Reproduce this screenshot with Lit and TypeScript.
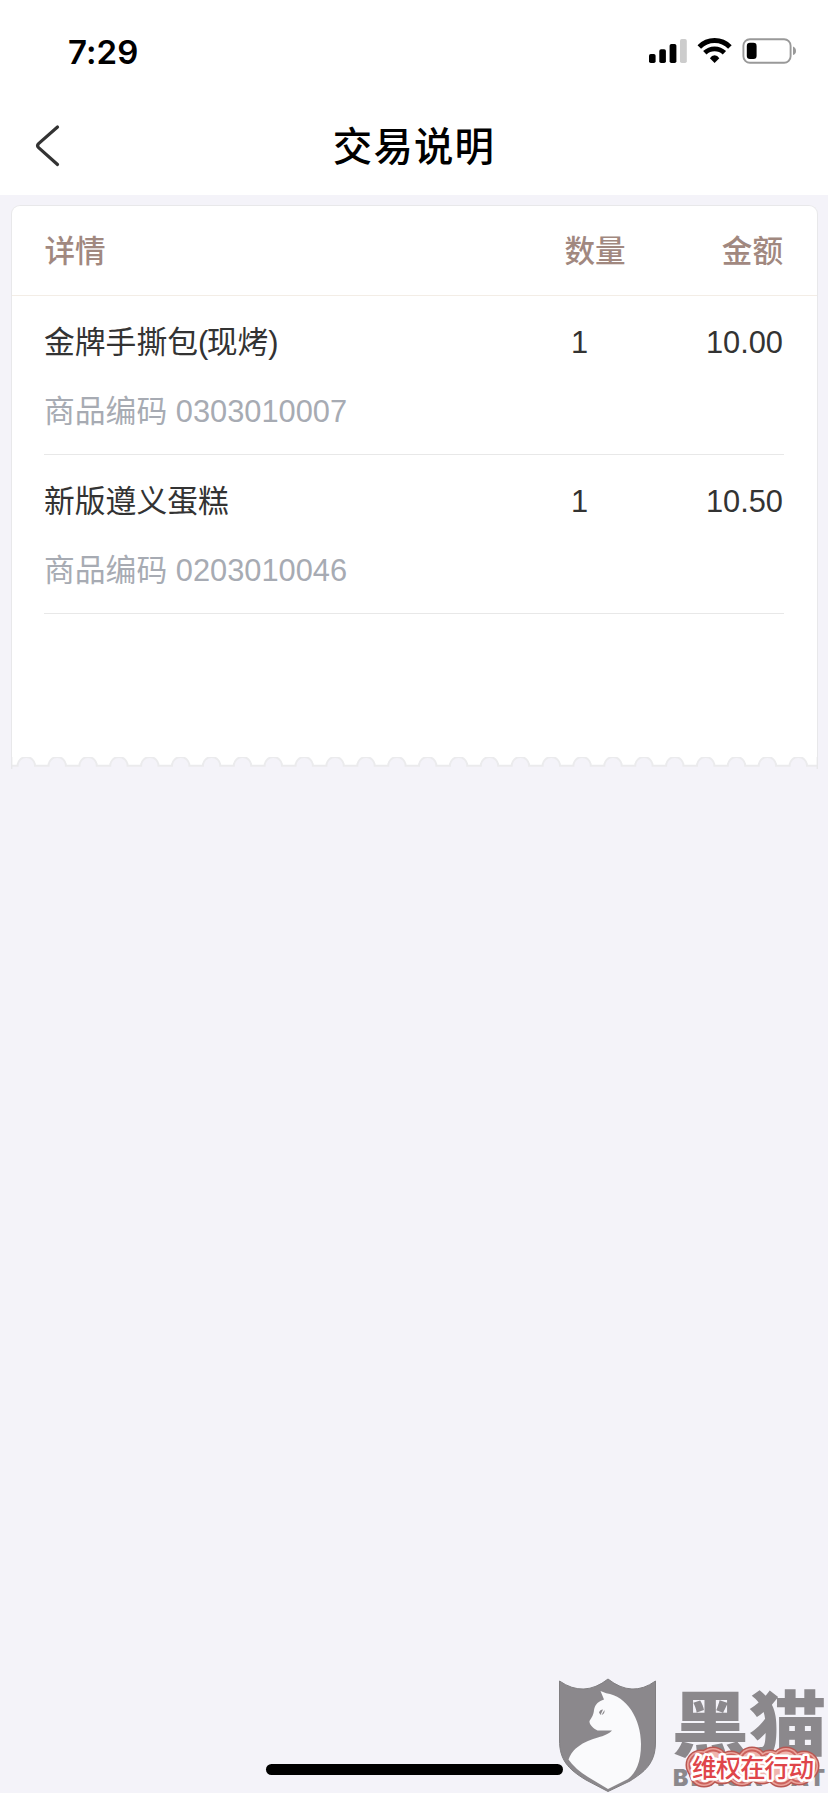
import { LitElement, html, css, svg } from "lit";
import { customElement } from "lit/decorators.js";

const ITEMS = [
  { name: "金牌手撕包(现烤)", code: "0303010007", qty: 1, amount: "10.00" },
  { name: "新版遵义蛋糕", code: "0203010046", qty: 1, amount: "10.50" },
];

@customElement("status-bar")
class StatusBar extends LitElement {
  static styles = css`
    :host { display: flex; justify-content: space-between; align-items: center; height: 102px; padding: 0 32px 0 68px; }
    .time { padding-top: 2px; font: 600 33px/40px Inter, sans-serif; letter-spacing: 0.1px; }
    svg { display: block; }
  `;
  render() {
    return html`
      <span class="time">7:29</span>
      <svg width="148" height="26" viewBox="648 38 148 26">
        <rect x="649" y="54" width="6.6" height="9" rx="1.8" />
        <rect x="659.3" y="49.3" width="6.6" height="13.7" rx="1.8" />
        <rect x="669.6" y="44" width="6.8" height="19" rx="1.8" />
        <rect x="680" y="39" width="6.8" height="24" rx="1.8" fill="#ccc" />
        <g fill="none" stroke="#000">
          <path d="M699.3 46.9a21.5 21.5 0 0 1 30.6 0" stroke-width="5" />
          <path d="M704.8 52.8a14 14 0 0 1 19.6 0" stroke-width="4.8" />
        </g>
        <path d="M714.6 63L709.9 58.2Q711.8 55.3 714.6 55.3T719.3 58.2Z" />
        <rect x="743.4" y="39.2" width="47.2" height="23.6" rx="6.5" fill="none" stroke="#999" stroke-width="1.9" />
        <rect x="746.8" y="42.8" width="9.8" height="16.2" rx="3.2" />
        <path d="M793 46.6Q796 48 796 51T793 55Z" fill="#999" />
      </svg>
    `;
  }
}

@customElement("nav-bar")
class NavBar extends LitElement {
  static styles = css`
    :host { display: grid; grid-template-columns: 100px 1fr 100px; align-items: center; height: 93px; }
    .back { display: block; margin: -5px 0 0 34px; }
    .title { margin: -10px 0 0; text-align: center; font: 500 39.4px/50px "Noto Sans CJK SC", sans-serif; letter-spacing: 1.2px; white-space: nowrap; }
  `;
  render() {
    return html`
      <svg class="back" width="28" height="44" viewBox="34 124 28 44" fill="none" stroke="#333" stroke-width="3.2" stroke-linecap="round">
        <path d="M57.5 127L38.6 143.6Q36.6 145.6 38.6 147.6L57.5 164.5" />
      </svg>
      <h1 class="title">交易说明</h1>
    `;
  }
}

@customElement("receipt-card")
class ReceiptCard extends LitElement {
  static styles = css`
    :host { display: block; margin: 10px 10px 0 11px; font: 30.8px/44px "Liberation Sans", "Noto Sans CJK SC", sans-serif; color: #333; }
    .body { height: 552px; box-sizing: border-box; background: #fff; border: 1.5px solid #e8e8ea; border-bottom: 0; border-radius: 9px 9px 0 0; }
    .cols { display: grid; grid-template-columns: 520px 100px 1fr; align-items: center; }
    .head { height: 86px; padding: 0 34px 3px 32.5px; border-bottom: 1px solid #f3ede6; color: #a1887f; font-family: "Noto Sans CJK SC", sans-serif; font-weight: 500; font-size: 30.6px; }
    .item { height: 158px; margin: 0 33px 0 32px; border-bottom: 1px solid #e8e8e8; }
    .line { padding-top: 25px; padding-right: 1px; }
    .paren { letter-spacing: -1.5px; }
    .qty { padding-left: 7px; }
    .amount { text-align: right; }
    .code { padding-top: 25px; color: #a7abb3; }
    .edge { display: block; }
  `;
  render() {
    const holes = Array.from({ length: 26 }, (_, k) => 15.3 + k * 30.88);
    const edge = holes.map((x) => `H${(x - 8.7).toFixed(1)}a8.7 8.7 0 0 1 17.4 0`).join("");
    return html`
      <div class="body">
        <div class="cols head"><span>详情</span><span>数量</span><span class="amount">金额</span></div>
        ${ITEMS.map(
          (item) => html`
            <div class="item">
              <div class="cols line">
                <span>${item.name.split(/([()])/).map((part) => (/[()]/.test(part) ? html`<span class="paren">${part}</span>` : part))}</span>
                <span class="qty">${item.qty}</span><span class="amount">${item.amount}</span>
              </div>
              <div class="code">商品编码 ${item.code}</div>
            </div>
          `
        )}
      </div>
      <svg class="edge" width="807" height="12" viewBox="0 0 807 12">
        <path d="M.7 0V8.8${edge}H806.3V0Z" fill="#fff" />
        <path d="M.7 8.8${edge}H806" fill="none" stroke="#ebebed" stroke-width="2" />
        <path d="M.7 0V12M806.3 0V12" stroke="#e8e8ea" stroke-width="1.4" />
      </svg>
    `;
  }
}

@customElement("brand-mark")
class BrandMark extends LitElement {
  static styles = css`
    :host { display: block; }
    svg { display: block; }
    .brand { font: 900 71px "Noto Sans CJK SC", sans-serif; fill: #8b888c; }
    .latin { font: 900 23px Inter, sans-serif; fill: #8b888c; }
    .slogan { font: 500 25.5px "Noto Sans CJK SC", sans-serif; fill: #df454a; stroke: #fff; stroke-width: 5px; stroke-linejoin: round; paint-order: stroke; }
  `;
  render() {
    const bumps = [
      [701, 1765], [713, 1762], [731, 1766], [752, 1762], [770, 1765], [786, 1762], [804, 1766],
      [704, 1772], [722, 1769], [742, 1771], [762, 1769], [781, 1772], [799, 1770],
    ];
    const layers = [
      [15.5, "#b95752"], [14, "#eba49c"], [12.4, "#cd625d"], [10.6, "#efb5ae"],
    ] as [number, string][];
    return html`
      <svg width="272" height="123" viewBox="556 1670 272 123">
        <path d="M559.5 1681Q584 1698 608 1679Q632 1698 655.5 1681V1742C655.5 1764 644 1772 630 1781L608 1791.5L586 1780C568 1769 559.5 1760 559.5 1740Z" fill="#8b888c" stroke="#807e81" stroke-width="1" />
        <path d="M600.5 1691L606.2 1693.2C627 1696 641 1719 641 1744C641 1762 636 1773 628 1779L608 1789L588 1777Q575 1769 568.5 1759.5C575 1742 595 1739 604 1735.5Q610 1733 612 1730.5H597.5C594 1729 589 1725 589.5 1721C592 1717 593.5 1715 594 1710C595 1704 599 1701 604 1699.5Z" fill="#fafafc" />
        <path d="M599 1712.5Q600 1709.500 603 1709.5L600.5 1715ZM604.5 1710Q605 1714 601.5 1715Z" fill="#8b888c" />
        <text class="brand" x="671.5" y="1750" textLength="155" lengthAdjust="spacingAndGlyphs">黑猫</text>
        <text class="latin" x="673" y="1786" textLength="152">BLACK CAT</text>
        ${layers.map(([r, color]) => bumps.map(([x, y]) => svg`<circle cx=${x} cy=${y} r=${r} fill=${color} />`))}
        <text class="slogan" x="692" y="1776.5" textLength="122">维权在行动</text>
      </svg>
    `;
  }
}

@customElement("app-root")
class AppRoot extends LitElement {
  static styles = css`
    :host { display: block; position: relative; height: 1793px; overflow: hidden; background: #f4f3f9; }
    .top { background: #fff; color: #000; }
    .home { position: absolute; left: 266px; bottom: 18px; width: 296.5px; height: 11px; border-radius: 6px; background: #000; }
    .mark { position: absolute; right: 0; bottom: 0; }
  `;
  render() {
    return html`
      <header class="top"><status-bar></status-bar><nav-bar></nav-bar></header>
      <receipt-card></receipt-card>
      <div class="home"></div>
      <brand-mark class="mark"></brand-mark>
    `;
  }
}
